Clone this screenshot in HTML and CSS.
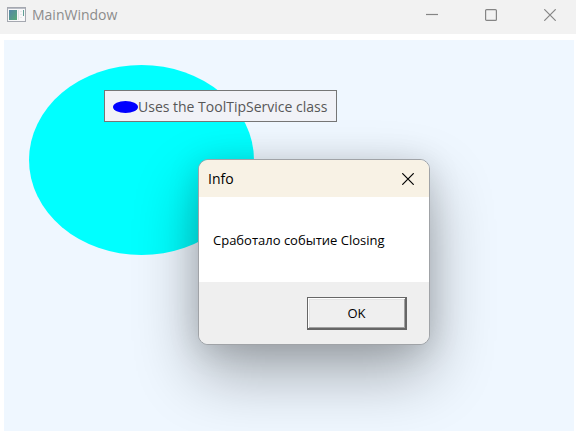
FILE: index.html
```html
<!DOCTYPE html>
<html lang="ru">
<head>
<meta charset="utf-8">
<meta name="viewport" content="width=device-width, initial-scale=1">
<title>MainWindow</title>
<link rel="stylesheet" href="styles.css">
</head>
<body>
<div class="window">
  <header class="titlebar">
    <svg class="app-icon" viewBox="0 0 19 16" aria-hidden="true">
      <defs>
        <linearGradient id="screen" x1="0" y1="0" x2="1" y2="1">
          <stop offset="0" stop-color="#5585a8"/>
          <stop offset="1" stop-color="#58aa78"/>
        </linearGradient>
      </defs>
      <rect x="0.5" y="0.5" width="18" height="14" fill="#f8f8f9" stroke="#a5a8b0"/>
      <path d="M1 1.5h17" stroke="#b9bdc6"/>
      <rect x="2" y="3" width="8" height="10" fill="url(#screen)"/>
      <path d="M11.5 3v10" stroke="#e1e2e5"/>
      <path d="M13 4.500h2M13 7.500h2M13 10.500h2" stroke="#e8e9ec"/>
      <path d="M16.500 3v6" stroke="#5f9f96" stroke-width="1"/>
    </svg>
    <h1 class="window-title">MainWindow</h1>
    <div class="controls">
      <button class="control" type="button" aria-label="Minimize"><svg class="glyph" viewBox="0 0 12 12"><path d="M0 5.500h12"/></svg></button>
      <button class="control" type="button" aria-label="Maximize"><svg class="glyph" viewBox="0 0 12 12"><rect x="0.600" y="0.600" width="10.800" height="10.800" rx="1"/></svg></button>
      <button class="control" type="button" aria-label="Close"><svg class="glyph" viewBox="0 0 12 12"><path d="M0.300 0.300l11.400 11.400M11.700 0.300L0.300 11.700"/></svg></button>
    </div>
  </header>
  <main class="canvas">
    <div class="ellipse"></div>
    <div class="tooltip" role="tooltip"><span class="dot"></span><span>Uses the ToolTipService class</span></div>
    <section class="dialog" role="dialog" aria-labelledby="dialog-title">
      <header class="dialog-head">
        <h2 class="dialog-title" id="dialog-title">Info</h2>
        <button class="dialog-close" type="button" aria-label="Close"><svg class="glyph" viewBox="0 0 12 12"><path d="M0.300 0.300l11.400 11.400M11.700 0.300L0.300 11.700"/></svg></button>
      </header>
      <p class="message">Сработало событие Closing</p>
      <footer class="dialog-foot"><button class="ok" type="button">OK</button></footer>
    </section>
  </main>
</div>
</body>
</html>
```
FILE: styles.css
```css
* {
  box-sizing: border-box;
}

body {
  margin: 0;
  background: #fff;
  font-family: "Open Sans", "Noto Sans", sans-serif;
}

h1, h2, p {
  margin: 0;
  font-weight: 400;
}

button {
  padding: 0;
  font-family: inherit;
}

.window {
  display: flex;
  flex-direction: column;
  min-height: 100vh;
}

.titlebar {
  display: flex;
  align-items: center;
  height: 34px;
  padding: 0 3px 4px 7px;
  background: #f2f2f2;
}

.app-icon {
  width: 19px;
  height: 16px;
}

.window-title {
  margin-left: 6px;
  font-size: 14px;
  line-height: 20px;
  color: #8c8c8c;
}

.controls {
  display: flex;
  gap: 13px;
  margin-left: auto;
}

.control {
  display: grid;
  place-items: center;
  width: 46px;
  height: 30px;
  border: 0;
  background: none;
  color: #858585;
}

.glyph {
  display: block;
  width: 12px;
  height: 12px;
  fill: none;
  stroke: currentColor;
  stroke-width: 1.2;
}

.canvas {
  position: relative;
  flex: 1;
  margin: 6px 2px 1px 4px;
  padding: 25px;
  background: #eff7ff;
  overflow: hidden;
}

.ellipse {
  width: 225px;
  height: 190px;
  border-radius: 50%;
  background: #0ff;
}

.tooltip {
  position: absolute;
  top: 50px;
  left: 100px;
  display: flex;
  align-items: center;
  width: 233px;
  height: 32px;
  padding: 1px 8px 0;
  border: 1px solid #767676;
  background: #f1f2f7;
  font-size: 14px;
  line-height: 20px;
  color: #575757;
  white-space: nowrap;
}

.dot {
  flex: none;
  width: 25px;
  height: 12px;
  border-radius: 50%;
  background: #00f;
}

.dialog {
  position: absolute;
  top: 119px;
  left: 194px;
  width: 232px;
  border: 1px solid #a0a3a7;
  border-radius: 10px;
  background: #fff;
  background-clip: padding-box;
  box-shadow: 0 28px 64px rgba(0, 0, 0, 0.32), 0 4px 32px rgba(0, 0, 0, 0.13);
  color: #000;
}

.dialog-head {
  display: flex;
  align-items: center;
  justify-content: space-between;
  height: 37px;
  padding: 0 6px 0 9px;
  border-radius: 9px 9px 0 0;
  background: #f8f2e5;
}

.dialog-title {
  font-size: 14px;
  line-height: 20px;
}

.dialog-close {
  display: grid;
  place-items: center;
  width: 30px;
  height: 30px;
  border: 0;
  background: none;
  color: #000;
}

.message {
  padding: 33px 14px 32px;
  font-size: 13px;
  line-height: 20px;
  white-space: nowrap;
}

.dialog-foot {
  display: flex;
  justify-content: flex-end;
  padding: 15px 22px 14px;
  border-radius: 0 0 9px 9px;
  background: #efefef;
}

.ok {
  width: 100px;
  height: 33px;
  border: solid #666;
  border-width: 1px 2px 2px 1px;
  background: #efefef;
  box-shadow: inset 1px 1px #fff, inset -1px -1px #a0a0a0, inset 2px 2px #e3e3e3;
  font-size: 13px;
  line-height: 20px;
  color: #000;
}
```
